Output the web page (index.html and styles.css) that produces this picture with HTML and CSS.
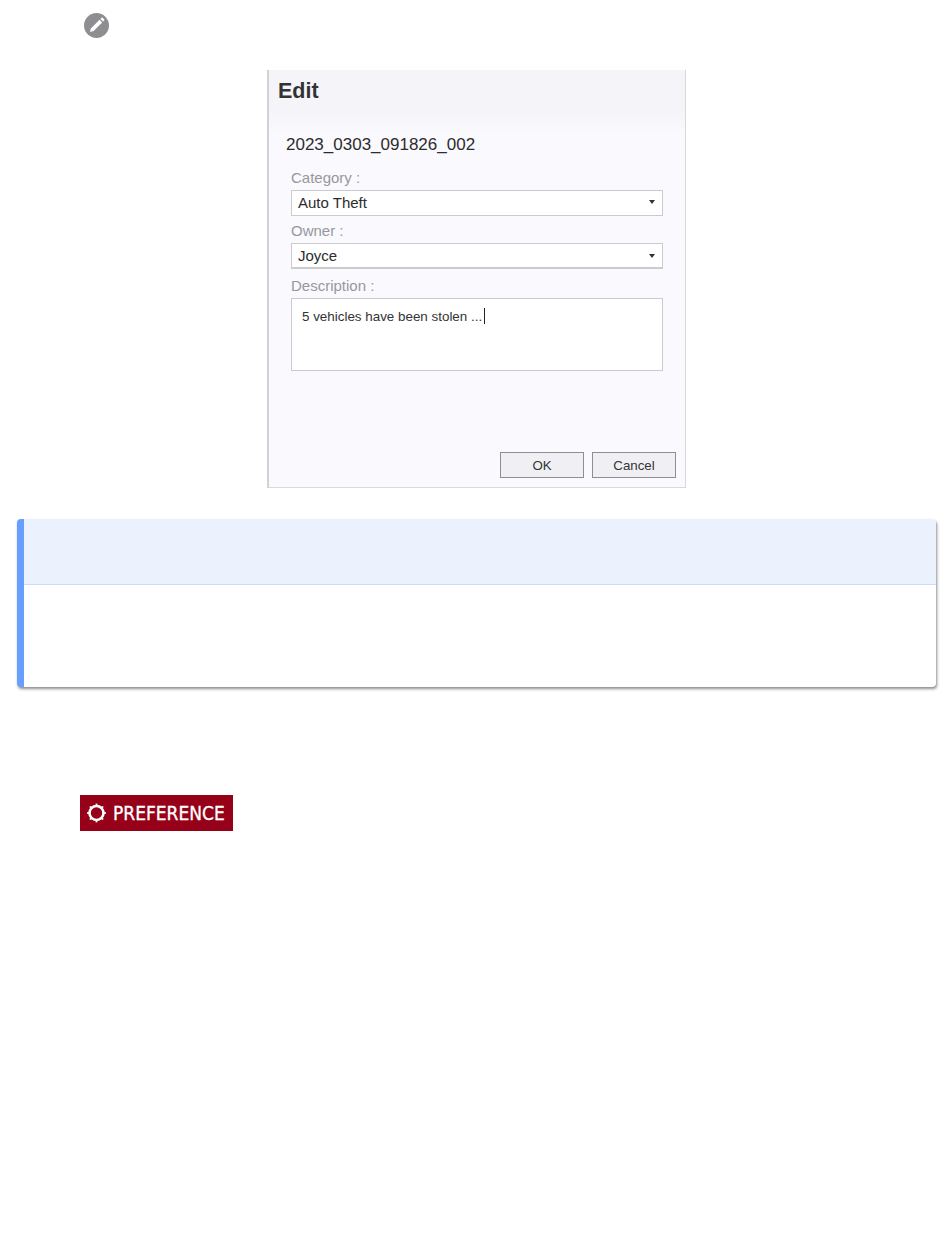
FILE: index.html
```html
<!DOCTYPE html>
<html lang="en">
<head>
    <meta charset="UTF-8">
    <meta name="viewport" content="width=device-width, initial-scale=1.0">
    <title>Edit</title>
    <link rel="stylesheet" href="styles.css">
</head>

<body>

<!-- Edit icon -->
<div class="edit-icon">
    <svg width="25" height="25" viewBox="0 0 25 25">
        <circle cx="12.5" cy="12.5" r="12.5" fill="#8e8d92"/>
        <path d="M6 19l.9-3.6 8.6-8.6 2.7 2.7-8.6 8.6z" fill="#fff"/>
        <path d="M16.4 5.9l1-1c.4-.4 1-.4 1.4 0l1.3 1.3c.4.4.4 1 0 1.4l-1 1z" fill="#fff"/>
    </svg>
</div>

<!-- Edit dialog -->
<div class="dialog">
    <div class="dialog-title">Edit</div>
    <div class="file-name">2023_0303_091826_002</div>
    <div class="form">
        <div class="field-label">Category :</div>
        <div class="select select-category">
            <span>Auto Theft</span>
            <span class="caret"></span>
        </div>
        <div class="field-label">Owner :</div>
        <div class="select select-owner">
            <span>Joyce</span>
            <span class="caret"></span>
        </div>
        <div class="field-label">Description :</div>
        <div class="textarea">5 vehicles have been stolen ...<span class="cursor"></span></div>
    </div>
    <div class="actions">
        <button class="button">OK</button>
        <button class="button">Cancel</button>
    </div>
</div>

<!-- Empty note panel -->
<div class="note">
    <div class="note-head"></div>
    <div class="note-body"></div>
</div>

<!-- Preference badge -->
<div class="badge">
    <svg width="22" height="22" viewBox="0 0 22 22">
        <circle cx="11.5" cy="11" r="7" fill="none" stroke="#fff" stroke-width="2.6"/>
        <g fill="#fff">
            <rect x="10.6" y="1.6" width="1.8" height="1.8"/>
            <rect x="10.6" y="18.6" width="1.8" height="1.8"/>
            <rect x="2.1" y="10.1" width="1.8" height="1.8"/>
            <rect x="19.1" y="10.1" width="1.8" height="1.8"/>
            <rect x="4.7" y="4.2" width="1.8" height="1.8"/>
            <rect x="16.5" y="4.2" width="1.8" height="1.8"/>
            <rect x="4.7" y="16" width="1.8" height="1.8"/>
            <rect x="16.5" y="16" width="1.8" height="1.8"/>
        </g>
    </svg>
    <span class="badge-text">PREFERENCE</span>
</div>

</body>
</html>
```

FILE: styles.css
```css
body {
    margin: 0;
    padding: 13px 0 0;
    font-family: 'Liberation Sans', Arial, sans-serif;
    background: #ffffff;
    color: #333333;
}

.edit-icon {
    margin-left: 84px;
    height: 25px;
}
.edit-icon svg {
    display: block;
}

/* Dialog */
.dialog {
    box-sizing: border-box;
    width: 419px;
    height: 418px;
    margin: 32px 0 0 267px;
    display: flex;
    flex-direction: column;
    background: linear-gradient(#f5f5f9 0, #f5f5f9 40px, #f9f9fe 65px);
    border-left: 2px solid #d2d2d4;
    border-right: 1px solid #d8d8da;
    border-bottom: 1px solid #d8d8da;
}
.dialog-title {
    margin: 10px 0 0 9px;
    font-size: 21.5px;
    line-height: 23px;
    font-weight: bold;
    color: #333333;
}
.file-name {
    margin: 31px 0 0 17px;
    font-size: 17px;
    line-height: 22px;
    color: #2c2c2c;
}
.form {
    margin: 13px 22px 0 22px;
}
.field-label {
    font-size: 15px;
    line-height: 17px;
    height: 17px;
    margin-bottom: 4px;
    color: #98989c;
}
.select {
    box-sizing: border-box;
    height: 26px;
    margin-bottom: 6px;
    padding: 0 7px 0 6px;
    display: flex;
    align-items: center;
    justify-content: space-between;
    font-size: 15px;
    color: #2c2c2c;
    background: #ffffff;
    border: 1px solid #cbcbce;
}
.select-category {
    padding-bottom: 2px;
}
.select-owner {
    border-bottom: 2px solid #cbcbce;
    margin-bottom: 8px;
}
.caret {
    width: 0;
    height: 0;
    border-left: 3.5px solid transparent;
    border-right: 3.5px solid transparent;
    border-top: 4px solid #333333;
}
.textarea {
    box-sizing: border-box;
    height: 73px;
    padding: 9px 10px;
    font-size: 13.4px;
    line-height: 17px;
    color: #333333;
    background: #ffffff;
    border: 1px solid #cbcbce;
}
.cursor {
    display: inline-block;
    width: 1px;
    height: 16px;
    margin-left: 2px;
    vertical-align: -3px;
    background: #222222;
}
.actions {
    margin-top: auto;
    margin-bottom: 9px;
    margin-right: 9px;
    display: flex;
    justify-content: flex-end;
    gap: 8px;
}
.button {
    box-sizing: border-box;
    width: 84px;
    height: 26px;
    padding: 0;
    font-family: 'Liberation Sans', Arial, sans-serif;
    font-size: 13.3px;
    color: #333333;
    background: #f0f0f4;
    border: 1px solid #8f8f92;
    border-radius: 0;
}

/* Note panel */
.note {
    box-sizing: border-box;
    width: 919px;
    height: 168px;
    margin: 31px 0 0 17px;
    overflow: hidden;
    background: #ffffff;
    border-left: 7px solid #689eff;
    border-radius: 4px;
    box-shadow: 1px 2px 3px rgba(0, 0, 0, 0.45);
}
.note-head {
    height: 66px;
    box-sizing: border-box;
    background: #ebf2fd;
    border-bottom: 1px solid #c6dffb;
}
.note-body {
    height: 102px;
}

/* Badge */
.badge {
    box-sizing: border-box;
    width: 153px;
    height: 36px;
    margin: 108px 0 0 80px;
    padding-left: 5px;
    display: flex;
    align-items: center;
    gap: 6px;
    background: #960018;
    color: #ffffff;
}
.badge svg {
    flex: none;
}
.badge-text {
    font-family: 'DejaVu Sans', sans-serif;
    font-stretch: condensed;
    font-size: 19px;
    line-height: 36px;
    white-space: nowrap;
    -webkit-text-stroke: 0.3px #ffffff;
}
```
